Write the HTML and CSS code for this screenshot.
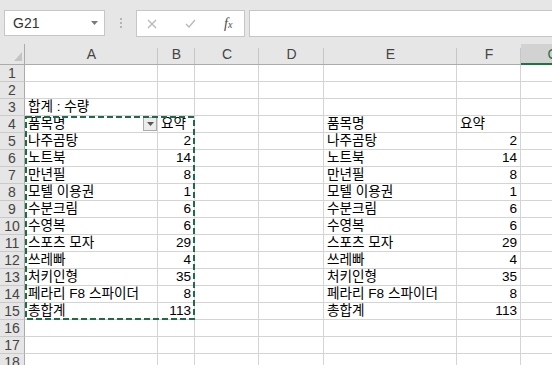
FILE: index.html
```html
<!DOCTYPE html>
<html lang="ko">
<head>
    <meta charset="UTF-8">
    <meta name="viewport" content="width=device-width, initial-scale=1.0">
    <title>피벗 테이블</title>
    <link rel="stylesheet" href="styles.css">
</head>
<body>
    <div class="toolbar">
        <div class="namebox">
            <span>G21</span>
            <svg width="7" height="4" viewBox="0 0 7 4"><path d="M0 0h7L3.5 4z" fill="#7a7a7a"/></svg>
        </div>
        <div class="grip"><i></i><i></i><i></i></div>
        <div class="fbuttons">
            <svg width="10" height="10" viewBox="0 0 10 10"><path d="M1 1l8 8M9 1l-8 8" stroke="#b8b8b8" stroke-width="1.3" fill="none"/></svg>
            <svg width="11" height="9" viewBox="0 0 11 9"><path d="M1 5l3 3 6-7" stroke="#b8b8b8" stroke-width="1.3" fill="none"/></svg>
            <span class="fx"><i>f</i><small>x</small></span>
        </div>
        <div class="finput"></div>
    </div>

    <div class="sheet">
        <!-- column headers -->
        <div class="corner"><svg width="8" height="9" viewBox="0 0 8 9"><path d="M8 0v9H0z" fill="#c4c4c4"/></svg></div>
        <div class="hd">A</div><div class="hd">B</div><div class="hd">C</div><div class="hd">D</div><div class="hd">E</div><div class="hd">F</div><div class="hd sel">G</div>

        <div class="rh">1</div><div class="c"></div><div class="c"></div><div class="c"></div><div class="c"></div><div class="c"></div><div class="c"></div><div class="c"></div>
        <div class="rh">2</div><div class="c"></div><div class="c"></div><div class="c"></div><div class="c"></div><div class="c"></div><div class="c"></div><div class="c"></div>
        <div class="rh">3</div><div class="c">합계 : 수량</div><div class="c"></div><div class="c"></div><div class="c"></div><div class="c"></div><div class="c"></div><div class="c"></div>
        <div class="rh">4</div>
        <div class="c filter"><span>품목명</span><span class="fbtn"><svg width="7" height="4" viewBox="0 0 7 4"><path d="M0 0h7L3.5 4z" fill="#555"/></svg></span></div>
        <div class="c">요약</div><div class="c"></div><div class="c"></div><div class="c">품목명</div><div class="c">요약</div><div class="c"></div>

        <div class="rh">5</div><div class="c">나주곰탕</div><div class="c num">2</div><div class="c"></div><div class="c"></div><div class="c">나주곰탕</div><div class="c num">2</div><div class="c"></div>
        <div class="rh">6</div><div class="c">노트북</div><div class="c num">14</div><div class="c"></div><div class="c"></div><div class="c">노트북</div><div class="c num">14</div><div class="c"></div>
        <div class="rh">7</div><div class="c">만년필</div><div class="c num">8</div><div class="c"></div><div class="c"></div><div class="c">만년필</div><div class="c num">8</div><div class="c"></div>
        <div class="rh">8</div><div class="c">모텔 이용권</div><div class="c num">1</div><div class="c"></div><div class="c"></div><div class="c">모텔 이용권</div><div class="c num">1</div><div class="c"></div>
        <div class="rh">9</div><div class="c">수분크림</div><div class="c num">6</div><div class="c"></div><div class="c"></div><div class="c">수분크림</div><div class="c num">6</div><div class="c"></div>
        <div class="rh">10</div><div class="c">수영복</div><div class="c num">6</div><div class="c"></div><div class="c"></div><div class="c">수영복</div><div class="c num">6</div><div class="c"></div>
        <div class="rh">11</div><div class="c">스포츠 모자</div><div class="c num">29</div><div class="c"></div><div class="c"></div><div class="c">스포츠 모자</div><div class="c num">29</div><div class="c"></div>
        <div class="rh">12</div><div class="c">쓰레빠</div><div class="c num">4</div><div class="c"></div><div class="c"></div><div class="c">쓰레빠</div><div class="c num">4</div><div class="c"></div>
        <div class="rh">13</div><div class="c">처키인형</div><div class="c num">35</div><div class="c"></div><div class="c"></div><div class="c">처키인형</div><div class="c num">35</div><div class="c"></div>
        <div class="rh">14</div><div class="c">페라리 F8 스파이더</div><div class="c num">8</div><div class="c"></div><div class="c"></div><div class="c">페라리 F8 스파이더</div><div class="c num">8</div><div class="c"></div>
        <div class="rh">15</div><div class="c">총합계</div><div class="c num">113</div><div class="c"></div><div class="c"></div><div class="c">총합계</div><div class="c num">113</div><div class="c"></div>

        <div class="rh">16</div><div class="c"></div><div class="c"></div><div class="c"></div><div class="c"></div><div class="c"></div><div class="c"></div><div class="c"></div>
        <div class="rh">17</div><div class="c"></div><div class="c"></div><div class="c"></div><div class="c"></div><div class="c"></div><div class="c"></div><div class="c"></div>
        <div class="rh">18</div><div class="c"></div><div class="c"></div><div class="c"></div><div class="c"></div><div class="c"></div><div class="c"></div><div class="c"></div>

        <!-- copy marquee around A4:B15 -->
        <div class="marquee">
            <svg width="170" height="204" viewBox="0 0 170 204"><rect x="1" y="1" width="168" height="202" fill="none" stroke="#1f6b45" stroke-width="2" stroke-dasharray="6 3"/></svg>
        </div>
    </div>
</body>
</html>
```

FILE: styles.css
```css
* {
    box-sizing: border-box;
}
body {
    margin: 0;
    overflow: hidden;
    background: #fff;
    font-family: "Liberation Sans", "Noto Sans CJK KR", sans-serif;
}
.toolbar {
    display: flex;
    align-items: flex-start;
    height: 44px;
    padding: 10px 0 0 4px;
    background: #e6e6e6;
}
.namebox {
    width: 101px;
    height: 26px;
    display: flex;
    align-items: center;
    justify-content: space-between;
    padding: 0 6px 0 8px;
    background: #fff;
    border: 1px solid #c6c6c6;
    font-size: 14px;
    color: #333;
}
.grip {
    width: 31px;
    height: 26px;
    display: flex;
    flex-direction: column;
    align-items: center;
    justify-content: center;
    gap: 2px;
}
.grip i {
    width: 2px;
    height: 2px;
    background: #b4b4b4;
}
.fbuttons {
    width: 109px;
    height: 27px;
    display: flex;
    align-items: center;
    gap: 28px;
    padding-left: 10px;
    background: #fff;
    border: 1px solid #c6c6c6;
}
.fx {
    font-family: "Liberation Serif", serif;
    font-size: 14px;
    color: #4a4a4a;
}
.fx small {
    font-size: 10px;
    font-style: italic;
}
.finput {
    flex: 1;
    height: 27px;
    margin-left: 4px;
    background: #fff;
    border: 1px solid #c6c6c6;
    border-right: none;
}
.sheet {
    position: relative;
    display: grid;
    grid-template-columns: 25px 133px 37px 64px 65px 133px 64px 64px;
    grid-template-rows: 21px;
    grid-auto-rows: 17px;
}
.corner {
    display: flex;
    align-items: flex-end;
    justify-content: flex-end;
    padding: 0 2px 3px 0;
    background: #e6e6e6;
    border-right: 1px solid #ababab;
    border-bottom: 1px solid #ababab;
}
.hd {
    background: linear-gradient(#c6c6c6, #c6c6c6) right 4px / 1px calc(100% - 4px) no-repeat, #e6e6e6;
    border-bottom: 1px solid #ababab;
    text-align: center;
    font-size: 14px;
    line-height: 21px;
    color: #444;
}
.hd.sel {
    background: #d2d2d2;
    border-bottom: 2px solid #217346;
    color: #217346;
}
.rh {
    background: #e6e6e6;
    border-right: 1px solid #ababab;
    border-bottom: 1px solid #cacaca;
    text-align: center;
    font-size: 14px;
    line-height: 16px;
    color: #444;
}
.c {
    padding: 0 2px 0 3px;
    border-right: 1px solid #d4d4d4;
    border-bottom: 1px solid #d4d4d4;
    font-size: 13.6px;
    line-height: 16px;
    white-space: nowrap;
    color: #000;
}
.num {
    text-align: right;
    padding-right: 3px;
}
.filter {
    display: flex;
    align-items: center;
    justify-content: space-between;
    padding-right: 0;
}
.fbtn {
    width: 14px;
    height: 14px;
    display: flex;
    align-items: center;
    justify-content: center;
    background: #ececec;
    border: 1px solid #ababab;
}
.marquee {
    position: absolute;
    grid-column: 2 / 4;
    grid-row: 5 / 17;
    inset: 0;
    pointer-events: none;
}
.marquee svg {
    display: block;
}
```
